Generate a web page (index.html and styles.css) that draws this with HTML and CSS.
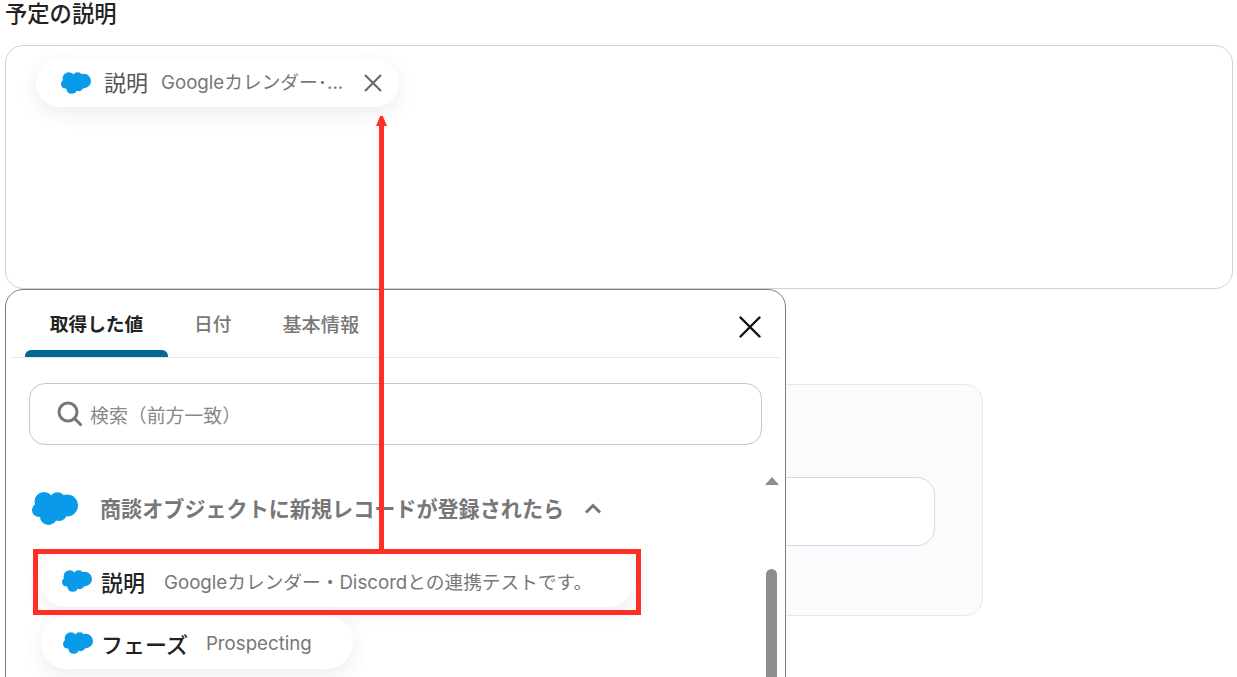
FILE: index.html
```html
<!DOCTYPE html>
<html lang="ja">
<head>
<meta charset="utf-8">
<title>予定の説明</title>
<link rel="stylesheet" href="styles.css">
</head>
<body>
<svg class="defs" width="0" height="0" aria-hidden="true">
  <symbol id="cloud" viewBox="0 0 46 33">
    <g fill="#0a9aea">
      <circle cx="7" cy="18" r="7"/>
      <circle cx="12" cy="9.5" r="9.5"/>
      <circle cx="25.5" cy="8" r="7.8"/>
      <circle cx="35" cy="13.5" r="11"/>
      <circle cx="16.5" cy="24.5" r="8.5"/>
      <circle cx="27" cy="21" r="8"/>
      <circle cx="21" cy="15" r="11"/>
    </g>
  </symbol>
</svg>
<main class="page">
  <h1 class="title">予定の説明</h1>
  <div class="textarea">
    <div class="chip chip-selected">
      <svg class="cloud"><use href="#cloud"/></svg>
      <span class="chip-name">説明</span>
      <span class="chip-value">Googleカレンダー･...</span>
      <svg class="chip-close" viewBox="0 0 18 18"><path d="M1 1l16 16M17 1L1 17"/></svg>
    </div>
  </div>
  <section class="lower">
    <div class="bg-card"><div class="bg-input"></div></div>
    <div class="popover">
      <div class="tabs">
        <div class="tab tab-active">取得した値</div>
        <div class="tab">日付</div>
        <div class="tab tab-wide">基本情報</div>
        <svg class="pop-close" viewBox="0 0 22 22"><path d="M1.5 1.5l19 19M20.5 1.5l-19 19"/></svg>
      </div>
      <div class="search">
        <svg class="search-icon" viewBox="0 0 26 26"><circle cx="11" cy="11" r="9"/><path d="M17.5 17.5l7 7"/></svg>
        <span>検索（前方一致）</span>
      </div>
      <div class="list">
        <div class="group">
          <svg class="group-cloud"><use href="#cloud"/></svg>
          <span class="group-name">商談オブジェクトに新規レコードが登録されたら</span>
          <svg class="chevron" viewBox="0 0 18 12"><path d="M2 10.5l7-7 7 7"/></svg>
        </div>
        <div class="chip chip-item chip-first">
          <svg class="cloud"><use href="#cloud"/></svg>
          <span class="item-name">説明</span>
          <span class="item-value">Googleカレンダー・Discordとの連携テストです。</span>
        </div>
        <div class="chip chip-item chip-second">
          <svg class="cloud"><use href="#cloud"/></svg>
          <span class="item-name">フェーズ</span>
          <span class="item-value">Prospecting</span>
        </div>
      </div>
      <div class="scrollbar">
        <div class="scroll-up"></div>
        <div class="scroll-thumb"></div>
      </div>
    </div>
  </section>
  <div class="mark-box"></div>
  <div class="mark-line"></div>
  <div class="mark-head"></div>
</main>
</body>
</html>
```
FILE: styles.css
```css
* { box-sizing: border-box; }
html, body { margin: 0; height: 100%; overflow: hidden; background: #fff; }
body { font-family: Inter, "Noto Sans CJK JP", sans-serif; color: #222; }
.defs { position: absolute; }
.page { position: relative; width: 1237px; height: 677px; overflow: hidden; padding-left: 5px; }
.title { margin: 0; height: 45px; font-size: 22.3px; line-height: 28px; font-weight: 500; color: #222; }
.textarea { width: 1228px; height: 244px; border: 1px solid #cdd2dc; border-radius: 18px; padding: 13px 30px; }
.chip { display: flex; align-items: center; background: #fff; border-radius: 26px; box-shadow: 0 6px 20px rgba(60, 50, 90, .09); }
.chip-selected { width: 363px; height: 48px; padding-left: 25px; }
.cloud { width: 30px; height: 22px; flex: none; }
.chip-name { margin: 0 0 5px 13px; font-size: 22px; color: #555; flex: none; }
.chip-value { margin: 0 0 5px 13px; width: 188px; font-size: 18.7px; color: #777; white-space: nowrap; flex: none; }
.chip-close { margin-left: 15px; width: 18px; height: 18px; fill: none; stroke: #666; stroke-width: 2; flex: none; }
.lower { position: relative; height: 388px; padding-top: 95px; }
.bg-card { width: 978px; height: 232px; padding: 92px 47px 0 0; background: #fbfafd; border: 1px solid #e8e8ec; border-radius: 18px; }
.bg-input { height: 69px; background: #fff; border: 1px solid #d6d7e1; border-radius: 18px; }
.popover { position: absolute; left: 0; top: 0; width: 781px; height: 420px; background: #fff; border: 1px solid #7c7c7c; border-radius: 18px; padding: 0 4px; }
.tabs { position: relative; display: flex; height: 68px; border-bottom: 1px solid #e8e8e8; padding-left: 15px; }
.tab { padding: 22px 26px 0; font-size: 18.7px; line-height: 26px; font-weight: 500; color: #777; white-space: nowrap; }
.tab-wide { padding-left: 25px; font-size: 19.2px; }
.tab-active { position: relative; width: 143px; padding: 22px 0 0; text-align: center; color: #222; font-weight: 700; }
.tab-active::after { content: ""; position: absolute; left: 0; right: 0; bottom: 0; height: 7px; background: #006a94; border-radius: 6px 6px 0 0; }
.pop-close { position: absolute; left: 729px; top: 26px; width: 22px; height: 22px; fill: none; stroke: #111; stroke-width: 2.4; stroke-linecap: round; }
.search { display: flex; align-items: center; margin: 25px 19px 0; height: 62px; border: 1px solid #c8c8c8; border-radius: 16px; padding-left: 27px; font-size: 18.9px; color: #888; }
.search-icon { width: 26px; height: 26px; margin-right: 7px; fill: none; stroke: #777; stroke-width: 3; flex: none; }
.list { padding: 46px 0 0 22px; }
.group { display: flex; align-items: center; height: 34px; }
.group-cloud { width: 46px; height: 33px; flex: none; }
.group-name { margin-left: 22px; font-size: 21.1px; font-weight: 700; color: #777; white-space: nowrap; }
.chevron { margin-left: 20px; width: 18px; height: 12px; fill: none; stroke: #777; stroke-width: 3; flex: none; }
.chip-item { height: 53px; padding-left: 22px; }
.chip-first { width: 594px; margin: 29px 0 0 8px; }
.chip-second { width: 312px; margin: 9px 0 0 9px; }
.chip-item .cloud { width: 30px; }
.item-name { margin-left: 9px; font-size: 22px; font-weight: 500; color: #222; flex: none; }
.chip-second .item-name { margin-left: 8px; }
.item-value { margin-left: 19px; font-size: 18.7px; color: #777; white-space: nowrap; }
.chip-second .item-value { margin-left: 18px; padding-top: 2px; }
.scrollbar { position: absolute; left: 759px; top: 187px; width: 13px; }
.scroll-up { width: 0; height: 0; margin: 0 auto; border-left: 7px solid transparent; border-right: 7px solid transparent; border-bottom: 8px solid #8e8c8f; }
.scroll-thumb { width: 11px; height: 120px; margin: 84px auto 0; background: #8e8c8f; border-radius: 6px; }
.mark-box { position: absolute; left: 33px; top: 549px; width: 608px; height: 66px; border: 5px solid #ff2f26; }
.mark-line { position: absolute; left: 379px; top: 124px; width: 5px; height: 426px; background: #ff2f26; }
.mark-head { position: absolute; left: 376px; top: 116px; width: 11px; height: 10px; background: #ff2f26; clip-path: polygon(38% 0, 62% 0, 100% 100%, 0 100%); }
```
